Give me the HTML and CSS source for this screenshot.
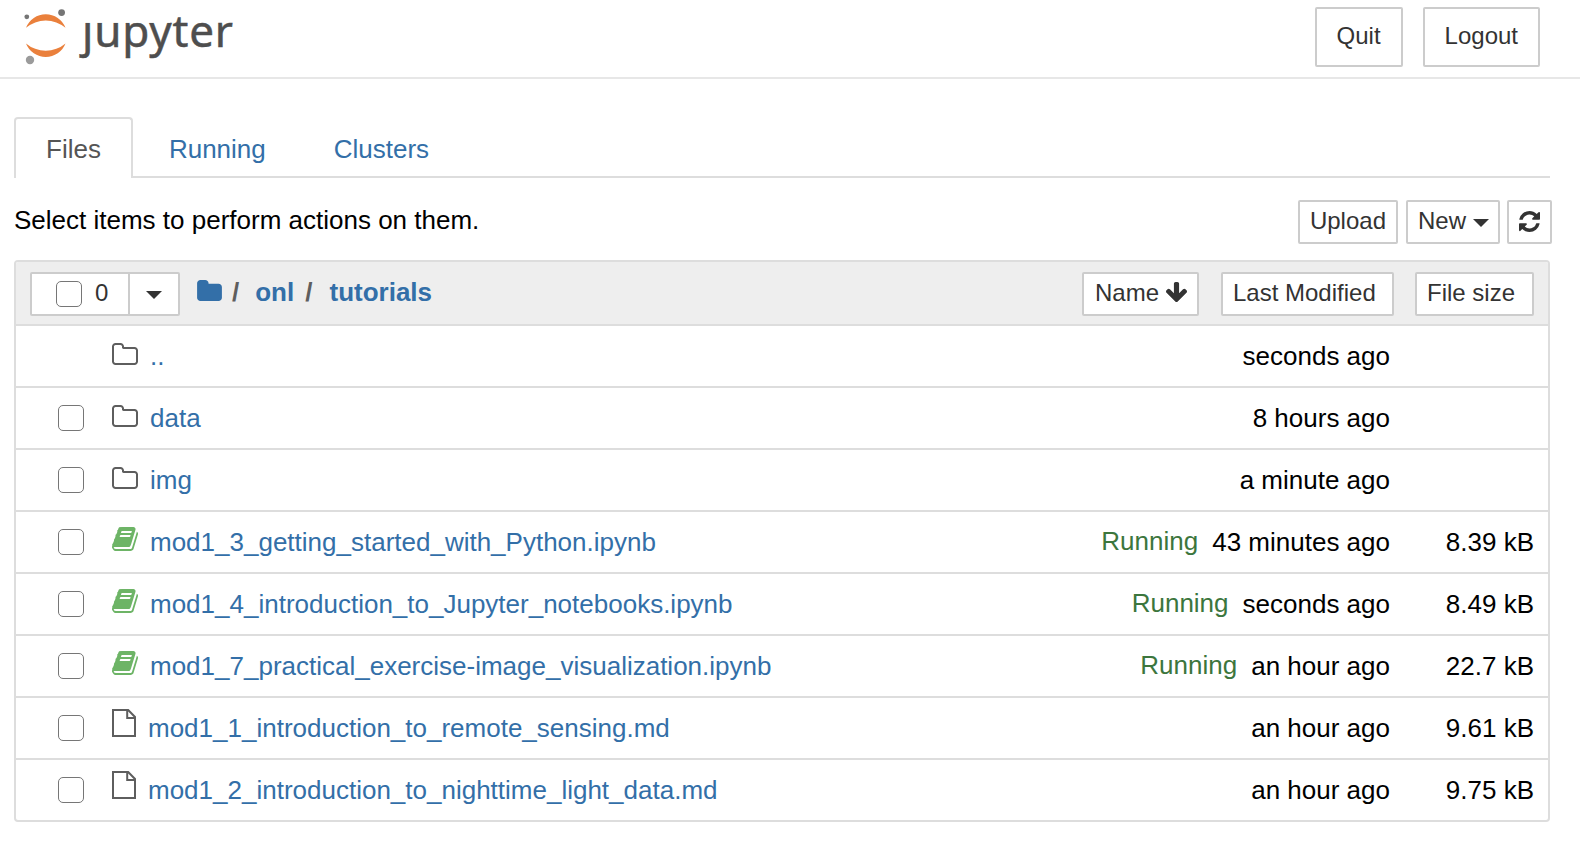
FILE: index.html
```html
<!DOCTYPE html>
<html lang="en">
<head>
<meta charset="utf-8">
<title>Home Page - Select or create a notebook</title>
<link rel="stylesheet" href="styles.css">
</head>
<body>
<svg class="sprite" aria-hidden="true">
  <symbol id="folder-o" viewBox="64 128 1664 1408"><path d="M1600 1312v-704q0-40-28-68t-68-28h-704q-40 0-68-28t-28-68v-64q0-40-28-68t-68-28h-320q-40 0-68 28t-28 68v960q0 40 28 68t68 28h1216q40 0 68-28t28-68zm128-704v704q0 92-66 158t-158 66h-1216q-92 0-158-66t-66-158v-960q0-92 66-158t158-66h320q92 0 158 66t66 158v32h672q92 0 158 66t66 158z"/></symbol>
  <symbol id="folder" viewBox="64 128 1664 1408"><path d="M1728 608v704q0 92-66 158t-158 66h-1216q-92 0-158-66t-66-158v-960q0-92 66-158t158-66h320q92 0 158 66t66 158v32h672q92 0 158 66t66 158z"/></symbol>
  <symbol id="refresh" viewBox="128 128 1536 1536"><path d="M1639 1056q0 5-1 7-64 268-268 434.5t-478 166.5q-146 0-282.5-55t-243.5-157l-129 129q-19 19-45 19t-45-19-19-45v-448q0-26 19-45t45-19h448q26 0 45 19t19 45-19 45l-137 137q71 66 161 102t187 36q134 0 250-65t186-179q11-17 53-117 8-23 30-23h192q13 0 22.5 9.5t9.5 22.5zm25-800v448q0 26-19 45t-45 19h-448q-26 0-45-19t-19-45 19-45l138-138q-148-137-349-137-134 0-250 65t-186 179q-11 17-53 117-8 23-30 23h-199q-13 0-22.5-9.5t-9.5-22.5v-7q65-268 270-434.5t480-166.5q146 0 284 55.5t245 156.5l130-129q19-19 45-19t45 19 19 45z"/></symbol>
  <symbol id="arrow-down" viewBox="117 128 1558 1483"><path d="M1675 832q0 53-37 90l-651 652q-39 37-91 37-53 0-90-37l-651-652q-38-36-38-90 0-53 38-91l74-75q39-37 91-37 53 0 90 37l294 294v-704q0-52 38-90t90-38h128q52 0 90 38t38 90v704l294-294q37-37 90-37 52 0 91 37l75 75q37 39 37 91z"/></symbol>
  <symbol id="book" viewBox="64 128 1664 1536"><path d="M1703 478q40 57 18 129l-275 906q-19 64-76.5 107.5t-122.5 43.5h-923q-77 0-148.5-53.5t-99.5-131.5q-24-67-2-127 0-4 3-27t4-37q1-8-3-21.5t-3-19.5q2-11 8-21t16.5-23.5 16.5-23.5q23-38 45-91.5t30-91.5q3-10 .5-30t-.5-28q3-11 17-28t17-23q21-36 42-92t25-90q1-9-2.5-32t.5-28q4-13 22-30.5t22-22.5q19-26 42.5-84.5t27.5-96.5q1-8-3-25.5t-2-26.5q2-8 9-18t18-23 17-21q8-12 16.5-30.5t15-35 16-36 19.5-32 26.5-23.5 36-11.5 47.5 5.5l-1 3q38-9 51-9h761q74 0 114 56t18 130l-274 906q-36 119-71.5 153.5t-128.5 34.5h-869q-27 0-38 15-11 16-1 43 24 70 144 70h923q29 0 56-15.5t35-41.5l300-987q7-22 5-57 38 15 59 43zm-1064 2q-4 13 2 22.5t20 9.5h608q13 0 25.5-9.5t16.5-22.5l21-64q4-13-2-22.5t-20-9.5h-608q-13 0-25.5 9.5t-16.5 22.5zm-83 256q-4 13 2 22.5t20 9.5h608q13 0 25.5-9.5t16.5-22.5l21-64q4-13-2-22.5t-20-9.5h-608q-13 0-25.5 9.5t-16.5 22.5z"/></symbol>
  <symbol id="file-o" viewBox="0 0 24 28"><path d="M1 1H16.2L23 8V27H1ZM15.2 1V9H23" fill="none" stroke="currentColor" stroke-width="2"/></symbol>
</svg>

<header class="header">
  <svg class="logo" width="240" height="70" viewBox="0 0 240 70" role="img" aria-label="jupyter">
    <defs><clipPath id="wordmark"><path d="M70 22.8H170V0H240V70H70Z"/></clipPath></defs>
    <path fill="#ea803c" d="M26 27.8A21.2 21.2 0 0 1 65.5 27.8A30.5 30.5 0 0 0 26 27.8Z"/>
    <path fill="#ea803c" d="M26 43.4A21.2 21.2 0 0 0 65.5 43.4A30.5 30.5 0 0 1 26 43.4Z"/>
    <circle cx="26.8" cy="16.8" r="2.4" fill="#757575"/>
    <circle cx="61.6" cy="12.6" r="3.4" fill="#757575"/>
    <circle cx="30" cy="60" r="4.2" fill="#9b9b9b"/>
    <text class="wordmark" x="82" y="47" textLength="151" clip-path="url(#wordmark)">jupyter</text>
  </svg>
  <div class="header-actions">
    <button class="btn btn-lg">Quit</button>
    <button class="btn btn-lg">Logout</button>
  </div>
</header>

<main class="content">
  <nav class="tabs">
    <a class="tab active">Files</a>
    <a class="tab">Running</a>
    <a class="tab">Clusters</a>
  </nav>

  <div class="toolbar">
    <span class="hint">Select items to perform actions on them.</span>
    <div class="tools">
      <button class="btn">Upload</button>
      <button class="btn btn-new">New<i class="caret"></i></button>
      <button class="btn btn-refresh"><svg class="i-refresh"><use href="#refresh"/></svg></button>
    </div>
  </div>

  <section class="list">
    <div class="list-header">
      <div class="select-group">
        <button class="btn select-all"><i class="checkbox"></i>0</button>
        <button class="btn select-menu"><i class="caret"></i></button>
      </div>
      <div class="breadcrumb">
        <svg class="i-home"><use href="#folder"/></svg>
        <span class="slash">/</span><a>onl</a><span class="slash second">/</span><a>tutorials</a>
      </div>
      <div class="sorters">
        <button class="btn sort-name">Name<svg class="i-arrow"><use href="#arrow-down"/></svg></button>
        <button class="btn sort-modified">Last Modified</button>
        <button class="btn sort-size">File size</button>
      </div>
    </div>

    <div class="row"><i class="checkbox hidden"></i><svg class="icon i-folder"><use href="#folder-o"/></svg><a class="name">..</a><span class="time">seconds ago</span><span class="size"></span></div>
    <div class="row"><i class="checkbox"></i><svg class="icon i-folder"><use href="#folder-o"/></svg><a class="name">data</a><span class="time">8 hours ago</span><span class="size"></span></div>
    <div class="row"><i class="checkbox"></i><svg class="icon i-folder"><use href="#folder-o"/></svg><a class="name">img</a><span class="time">a minute ago</span><span class="size"></span></div>
    <div class="row"><i class="checkbox"></i><svg class="icon i-book"><use href="#book"/></svg><a class="name">mod1_3_getting_started_with_Python.ipynb</a><span class="running">Running</span><span class="time">43 minutes ago</span><span class="size">8.39 kB</span></div>
    <div class="row"><i class="checkbox"></i><svg class="icon i-book"><use href="#book"/></svg><a class="name">mod1_4_introduction_to_Jupyter_notebooks.ipynb</a><span class="running">Running</span><span class="time">seconds ago</span><span class="size">8.49 kB</span></div>
    <div class="row"><i class="checkbox"></i><svg class="icon i-book"><use href="#book"/></svg><a class="name">mod1_7_practical_exercise-image_visualization.ipynb</a><span class="running">Running</span><span class="time">an hour ago</span><span class="size">22.7 kB</span></div>
    <div class="row"><i class="checkbox"></i><svg class="icon i-file"><use href="#file-o"/></svg><a class="name">mod1_1_introduction_to_remote_sensing.md</a><span class="time">an hour ago</span><span class="size">9.61 kB</span></div>
    <div class="row"><i class="checkbox"></i><svg class="icon i-file"><use href="#file-o"/></svg><a class="name">mod1_2_introduction_to_nighttime_light_data.md</a><span class="time">an hour ago</span><span class="size">9.75 kB</span></div>
  </section>
</main>
</body>
</html>
```
FILE: styles.css
```css
* { box-sizing: border-box; }

body {
  margin: 0;
  background: #fff;
  color: #000;
  font: 26px/37px "Liberation Sans", Arial, sans-serif;
}

.sprite { display: none; }
svg { display: block; flex: none; fill: currentColor; }
a { color: #336fa8; text-decoration: none; }

.header {
  display: flex;
  justify-content: space-between;
  height: 79px;
  padding: 0 40px 0 0;
  border-bottom: 2px solid #e7e7e7;
}
.wordmark {
  font: 44px "Noto Sans", "Open Sans", sans-serif;
  fill: #4e4e4e;
  stroke: #4e4e4e;
  stroke-width: 0.5px;
}
.header-actions { display: flex; gap: 20px; padding-top: 7px; }

.btn {
  display: flex;
  align-items: center;
  height: 44px;
  margin: 0;
  padding: 0 10px 2px;
  border: 2px solid #ccc;
  border-radius: 2px;
  background: #fff;
  color: #333;
  font: 24px/36px "Liberation Sans", Arial, sans-serif;
  white-space: nowrap;
}
.btn-lg { height: 60px; padding: 0 20px 2px; }

.caret {
  width: 0;
  border-top: 8px solid #333;
  border-left: 8px solid transparent;
  border-right: 8px solid transparent;
}

.content { padding: 38px 30px 0 14px; }

.tabs { display: flex; gap: 4px; height: 61px; border-bottom: 2px solid #ddd; }
.tab {
  height: 61px;
  padding: 12px 30px 0;
  border: 2px solid transparent;
  border-bottom: 0;
  border-radius: 4px 4px 0 0;
}
.tab.active { border-color: #ddd; background: #fff; color: #555; }

.toolbar {
  display: flex;
  justify-content: space-between;
  height: 82px;
  padding-top: 22px;
  margin-right: -2px;
}
.hint { padding-top: 2px; }
.tools { display: flex; }
.btn-new { width: 94px; margin: 0 7px 0 8px; }
.btn-new .caret { margin: 4px 0 0 7px; }
.btn-refresh { width: 45px; }
.i-refresh { width: 21px; height: 21px; }

.list { border: 2px solid #ddd; border-radius: 4px; overflow: hidden; }
.list-header {
  display: flex;
  height: 62px;
  padding: 10px 14px 0;
  background: #eee;
}

.checkbox {
  flex: none;
  width: 26px;
  height: 26px;
  border: 1px solid #767676;
  border-radius: 5px;
  background: #fff;
}
.checkbox.hidden { visibility: hidden; }

.select-group { display: flex; }
.select-all { width: 100px; padding: 0 0 2px 24px; gap: 13px; border-radius: 2px 0 0 2px; }
.select-all .checkbox { margin-top: 2px; }
.select-menu { width: 52px; margin-left: -2px; padding: 0 0 2px 16px; border-radius: 0 2px 2px 0; }
.select-menu .caret { margin-top: 4px; }

.breadcrumb { display: flex; padding: 2px 0 0 17px; font-weight: bold; }
.i-home { width: 25px; height: 21px; margin-top: 6px; color: #336fa8; }
.slash { margin: 0 16px 0 10px; color: #5e5e5e; }
.slash.second { margin: 0 17px 0 11px; }

.sorters { display: flex; margin-left: auto; }
.sort-name { width: 117px; padding-left: 11px; }
.i-arrow { width: 21px; height: 20px; margin: 0 0 2px 7px; }
.sort-modified { width: 173px; margin: 0 21px 0 22px; }
.sort-size { width: 119px; }

.row {
  display: flex;
  height: 62px;
  padding: 12px 14px 0 42px;
  border-top: 2px solid #ddd;
}
.row .checkbox { margin: 5px 28px 0 0; }
.icon { color: #5e5e5e; }
.i-folder { width: 26px; height: 22px; margin: 5px 12px 0 0; }
.i-book { width: 26px; height: 24px; margin: 3px 12px 0 0; color: #6db466; }
.i-file { width: 24px; height: 28px; margin: -1px 12px 0 0; }
.name { margin-right: auto; }
.running { margin: -1px 14px 0 0; color: #3c763d; }
.size { width: 144px; text-align: right; }
```
